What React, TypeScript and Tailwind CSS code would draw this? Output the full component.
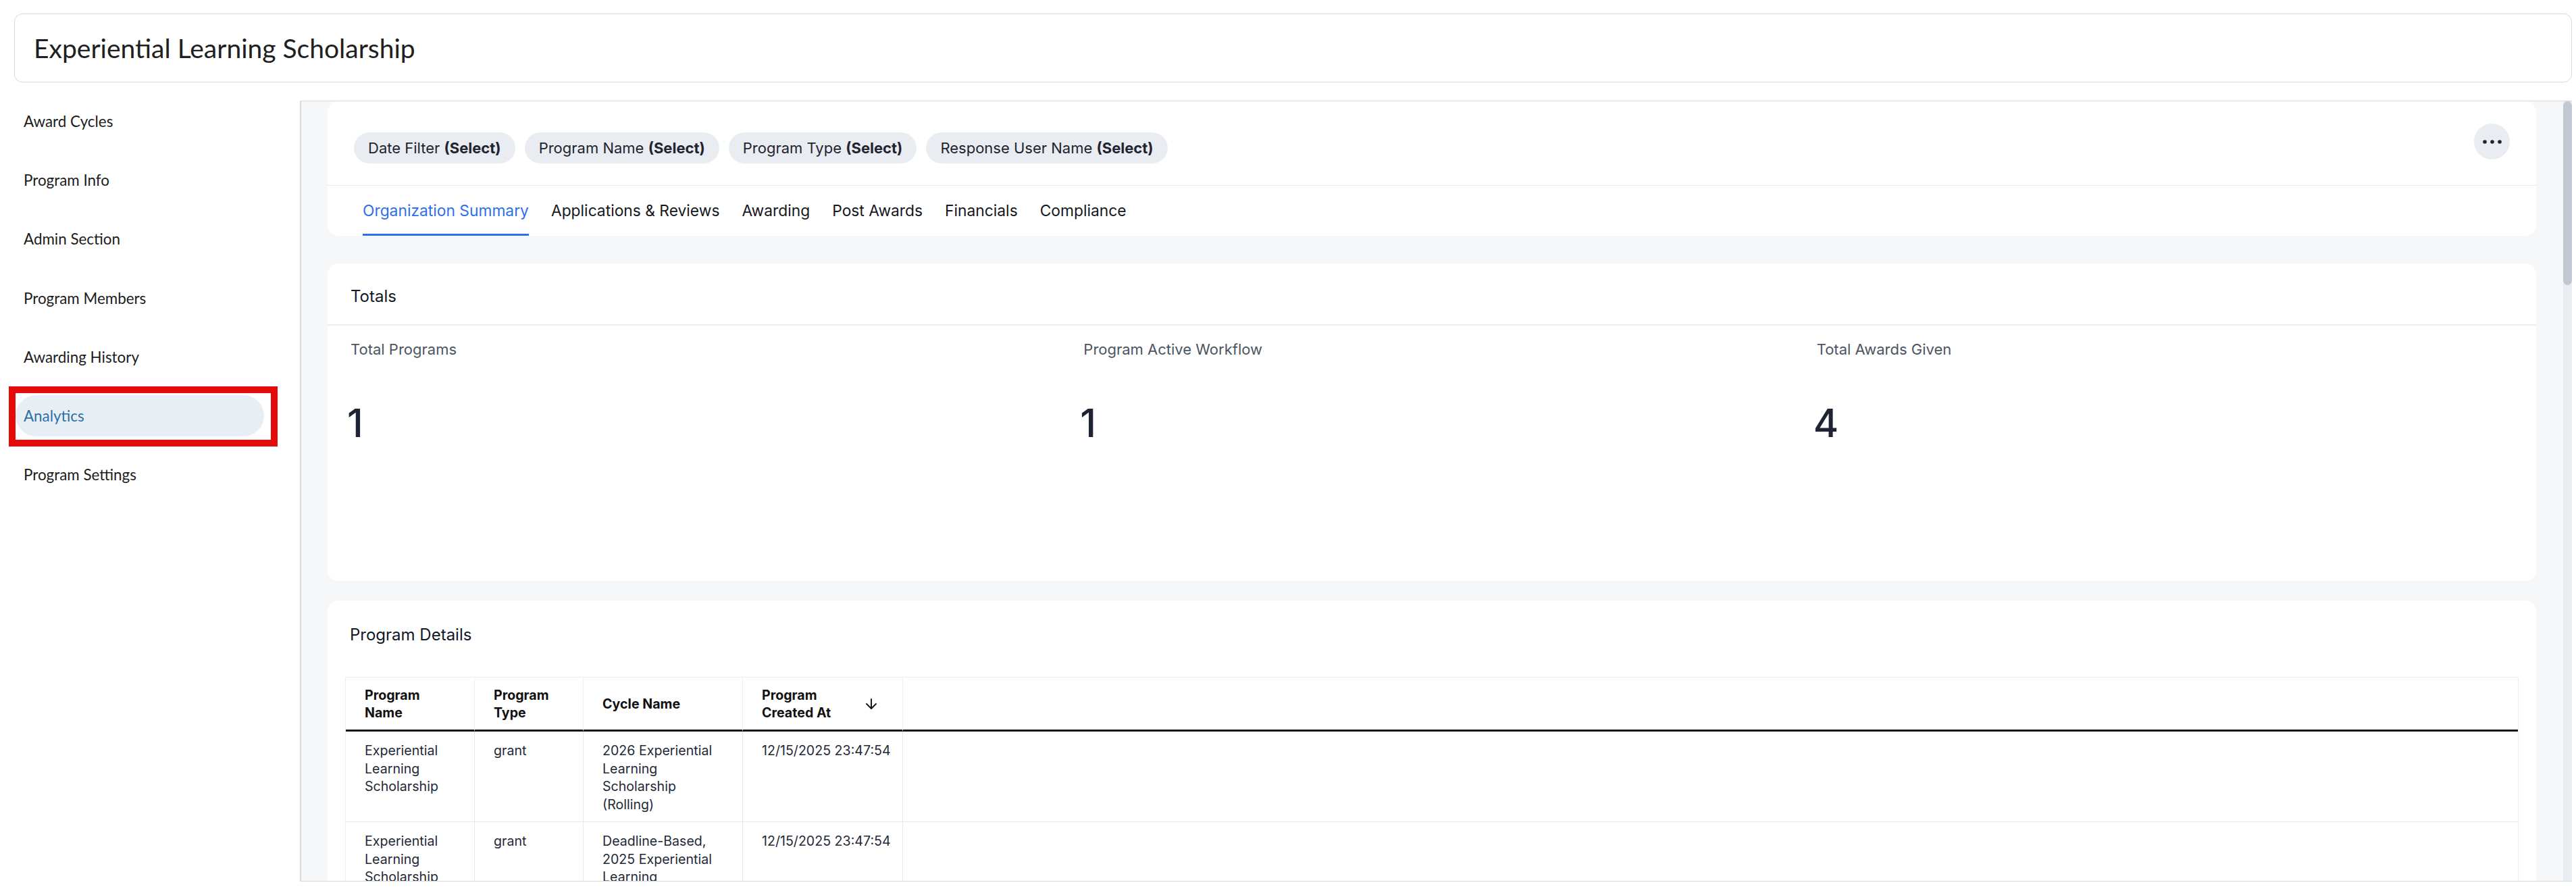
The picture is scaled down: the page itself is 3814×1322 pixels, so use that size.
import { ArrowDown } from "lucide-react";

const navItems = [
  "Award Cycles",
  "Program Info",
  "Admin Section",
  "Program Members",
  "Awarding History",
  "Analytics",
  "Program Settings",
];

const filters = ["Date Filter", "Program Name", "Program Type", "Response User Name"];

const tabs = [
  "Organization Summary",
  "Applications & Reviews",
  "Awarding",
  "Post Awards",
  "Financials",
  "Compliance",
];

const stats = [
  { label: "Total Programs", value: "1" },
  { label: "Program Active Workflow", value: "1" },
  { label: "Total Awards Given", value: "4" },
];

const rows = [
  {
    name: "Experiential Learning Scholarship",
    type: "grant",
    cycle: "2026 Experiential Learning Scholarship (Rolling)",
    created: "12/15/2025 23:47:54",
  },
  {
    name: "Experiential Learning Scholarship",
    type: "grant",
    cycle: "Deadline-Based, 2025 Experiential Learning Scholarship",
    created: "12/15/2025 23:47:54",
  },
];

function Dots() {
  return (
    <svg width="30" height="8" viewBox="0 0 30 8" aria-hidden="true">
      <circle cx="4" cy="4" r="2.8" fill="#1f2430" />
      <circle cx="15" cy="4" r="2.8" fill="#1f2430" />
      <circle cx="26" cy="4" r="2.8" fill="#1f2430" />
    </svg>
  );
}

export default function App() {
  return (
    <div className="w-[3814px] h-[1322px] overflow-hidden bg-white text-[#1f2937] font-['Inter',sans-serif]">
      {/* Page title */}
      <div className="pt-[20px] pl-[21px] pr-[6px]">
        <header className="h-[102px] rounded-[12px] border-[1.5px] border-[#d9dadc] flex items-center pl-[28px]">
          <h1 className="font-['Lato',sans-serif] text-[39px] leading-none text-[#202020]">
            Experiential Learning Scholarship
          </h1>
        </header>
      </div>

      <div className="mt-[27px] flex pr-[6px]">
        {/* Side navigation */}
        <nav className="w-[444px] shrink-0 pl-[23px] flex flex-col gap-[26.3px] font-['Lato',sans-serif]">
          {navItems.map((item) =>
            item === "Analytics" ? (
              <div key={item} className="relative w-[368px]">
                <div className="h-[61px] rounded-full bg-[#e7eff5] flex items-center pl-[12px] text-[22.4px] text-[#2d6fa6]">
                  {item}
                </div>
                <div className="pointer-events-none absolute -top-[13px] -left-[10px] -right-[20px] -bottom-[15px] border-[10px] border-[#e50b0b]" />
              </div>
            ) : (
              <div key={item} className="h-[61px] flex items-center pl-[12px] text-[22.4px] text-[#1c1c1c]">
                {item}
              </div>
            )
          )}
        </nav>

        {/* Analytics panel */}
        <main className="flex-1 h-[1156px] border-l-[2px] border-t border-b border-[#d7dade] bg-[#f6f7f9] flex overflow-hidden">
          <div className="flex-1 min-w-0 pl-[39px] pr-[40px] flex flex-col">
            {/* Filters and tabs */}
            <section className="shrink-0 bg-white rounded-[16px]">
              <div className="h-[125px] flex items-start justify-between px-[39px] pt-[33px] border-b border-[#e6e8eb]">
                <div className="flex gap-[14px] mt-[13px]">
                  {filters.map((f) => (
                    <div
                      key={f}
                      className="h-[46px] px-[21px] rounded-full bg-[#e9ecf1] flex items-center text-[22px] text-[#1f2430] whitespace-nowrap"
                    >
                      {f}&nbsp;<span className="font-bold">(Select)</span>
                    </div>
                  ))}
                </div>
                <button className="w-[53px] h-[53px] rounded-full bg-[#e9ecf1] flex items-center justify-center">
                  <Dots />
                </button>
              </div>
              <div className="h-[74px] flex gap-[33px] pl-[52px]">
                {tabs.map((t, i) => (
                  <div
                    key={t}
                    className={
                      i === 0
                        ? "h-full flex items-center pt-[4px] border-b-[3px] border-[#2f6fec] text-[22.8px] text-[#2f6fec] whitespace-nowrap"
                        : "h-full flex items-center pt-[4px] border-b-[3px] border-transparent text-[22.8px] text-[#16181d] whitespace-nowrap"
                    }
                  >
                    {t}
                  </div>
                ))}
              </div>
            </section>

            {/* Totals */}
            <section className="shrink-0 mt-[41px] h-[470px] bg-white rounded-[16px] overflow-hidden">
              <div className="h-[90px] flex items-center pt-[8px] pl-[34px] text-[24px] text-[#111827]">
                Totals
              </div>
              <div className="h-[2px] bg-[#e9eef3]" />
              <div className="grid grid-cols-3 gap-x-[54px] px-[34px] pt-[20px]">
                {stats.map((s) => (
                  <div key={s.label}>
                    <div className="text-[22px] leading-[30px] text-[#4b5563]">{s.label}</div>
                    <div className="mt-[66px] -ml-[5px] text-[57px] leading-none font-medium text-[#1e2433]">
                      {s.value}
                    </div>
                  </div>
                ))}
              </div>
            </section>

            {/* Program details */}
            <section className="shrink-0 mt-[29px] bg-white rounded-t-[16px] px-[26px]">
              <h2 className="pt-[36px] pl-[7px] text-[24px] leading-[30px] text-[#111827]">Program Details</h2>
              <table className="mt-[47px] w-full table-fixed border-separate border-spacing-0 border-t border-l border-r border-[#eceef1] text-left">
                <colgroup>
                  <col className="w-[191px]" />
                  <col className="w-[161px]" />
                  <col className="w-[236px]" />
                  <col className="w-[237px]" />
                  <col />
                </colgroup>
                <thead>
                  <tr>
                    <th className="h-[80px] px-[28px] align-middle border-r border-[#eceef1] border-b-[3px] border-b-[#111111] text-[19.6px] leading-[26px] font-bold text-[#111111]">
                      Program
                      <br />
                      Name
                    </th>
                    <th className="h-[80px] px-[28px] align-middle border-r border-[#eceef1] border-b-[3px] border-b-[#111111] text-[19.6px] leading-[26px] font-bold text-[#111111]">
                      Program
                      <br />
                      Type
                    </th>
                    <th className="h-[80px] px-[28px] align-middle border-r border-[#eceef1] border-b-[3px] border-b-[#111111] text-[19.6px] leading-[26px] font-bold text-[#111111]">
                      Cycle Name
                    </th>
                    <th className="h-[80px] pl-[28px] pr-[34px] align-middle border-r border-[#eceef1] border-b-[3px] border-b-[#111111] text-[19.6px] leading-[26px] font-bold text-[#111111]">
                      <div className="flex items-center justify-between">
                        <span>
                          Program
                          <br />
                          Created At
                        </span>
                        <ArrowDown size={24} strokeWidth={2} className="text-[#1a1a1a]" />
                      </div>
                    </th>
                    <th className="h-[80px] border-b-[3px] border-b-[#111111]" />
                  </tr>
                </thead>
                <tbody>
                  {rows.map((r, i) => (
                    <tr key={i}>
                      <td className="px-[28px] pt-[15px] pb-[12px] align-top border-r border-b border-[#e6e8ec] text-[19.6px] leading-[26.5px] text-[#1f2937]">
                        {r.name}
                      </td>
                      <td className="px-[28px] pt-[15px] pb-[12px] align-top border-r border-b border-[#e6e8ec] text-[19.6px] leading-[26.5px] text-[#1f2937]">
                        {r.type}
                      </td>
                      <td className="px-[28px] pt-[15px] pb-[12px] align-top border-r border-b border-[#e6e8ec] text-[19.6px] leading-[26.5px] text-[#1f2937]">
                        {r.cycle}
                      </td>
                      <td className="pl-[28px] pr-[8px] pt-[15px] pb-[12px] align-top border-r border-b border-[#e6e8ec] text-[19.6px] leading-[26.5px] text-[#1f2937] whitespace-nowrap">
                        {r.created}
                      </td>
                      <td className="align-top border-b border-[#e6e8ec]" />
                    </tr>
                  ))}
                </tbody>
              </table>
            </section>
          </div>

          {/* Scrollbar */}
          <div className="w-[13px] shrink-0 bg-[#e9ecf0]">
            <div className="h-[272px] rounded-full bg-[#c2c8d1]" />
          </div>
        </main>
      </div>
    </div>
  );
}
